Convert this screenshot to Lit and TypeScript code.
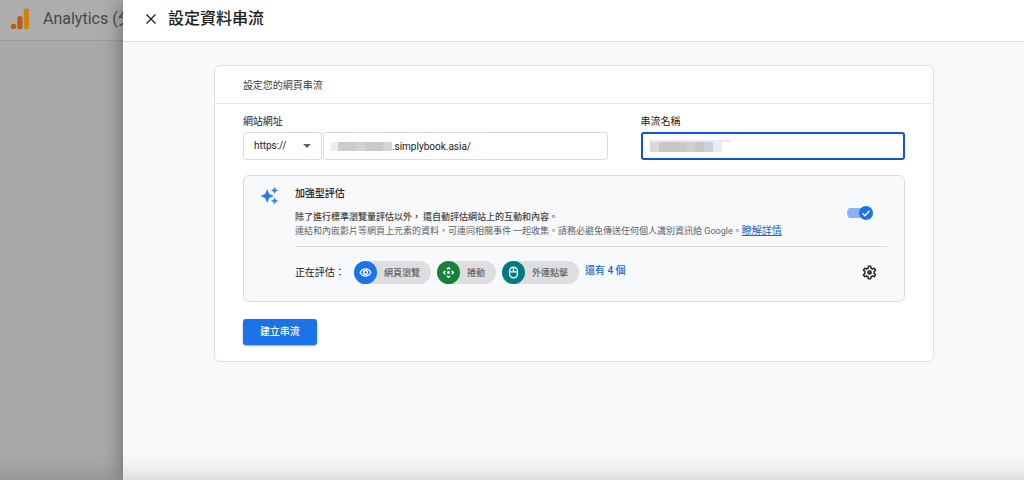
import { LitElement, html, css, svg } from "lit";
import { customElement, property, state } from "lit/decorators.js";

const eye = svg`<path d="M1.500 8C3 5 5.300 3.600 8 3.600S13 5 14.500 8C13 11 10.700 12.400 8 12.400S3 11 1.500 8Z" /><circle cx="8" cy="8" r="2.400" />`;
const scroll = svg`<circle cx="8" cy="8" r="1.700" fill="currentColor" stroke="none" /><path d="M5.900 4.100 8 2 10.100 4.100M5.900 11.900 8 14 10.100 11.900M4.100 5.900 2 8 4.100 10.100M11.900 5.900 14 8 11.900 10.100" />`;
const mouse = svg`<rect x="3.200" y="1.500" width="9.600" height="13" rx="4.600" /><path d="M3.200 7.200H12.800M8 2V7" />`;

@customElement("metric-chip")
class MetricChip extends LitElement {
  @property() label = "";
  @property() tone = "blue";
  @property({ attribute: false }) icon: unknown;

  static styles = css`
    :host { display: block; }
    .chip { display: flex; align-items: center; height: 23px; border-radius: 12px; background: #dedede; color: #5f6368; font-size: 9px; font-weight: 500; padding-right: 11px; gap: 7px; white-space: nowrap; }
    .dot { display: grid; place-items: center; width: 23px; height: 23px; border-radius: 50%; color: #fff; }
    .blue { background: #1a73e8; }
    .green { background: #188038; }
    .teal { background: #007b83; }
    svg { width: 13px; height: 13px; fill: none; stroke: currentColor; stroke-width: 1.7; }
  `;

  render() {
    return html`<div class="chip">
      <span class="dot ${this.tone}"><svg viewBox="0 0 16 16" aria-hidden="true">${this.icon}</svg></span>
      <span>${this.label}</span>
    </div>`;
  }
}

@customElement("app-root")
class AppRoot extends LitElement {
  @state() private enhanced = true;

  static styles = css`
    :host { display: block; font-family: Roboto, "Noto Sans CJK TC", sans-serif; color: #202124; font-size: 10px; line-height: 14px; }
    * { box-sizing: border-box; }
    button, input, select { font: inherit; color: inherit; margin: 0; }
    h1, h2, h3, p { margin: 0; font-size: inherit; font-weight: 400; }
    .page { position: relative; display: grid; grid-template-columns: 12% minmax(0, 1fr); min-height: 100vh; overflow: hidden; }
    .behind { background: #a8a9aa; overflow: hidden; }
    .brand { display: flex; align-items: center; gap: 13px; height: 41px; padding: 0 0 3px 10px; background: #adadad; border-bottom: 1px solid #9b9b9c; font-size: 16px; color: #45484b; white-space: nowrap; }
    .brand svg { width: 20px; height: 22px; flex: none; }
    .drawer { position: relative; background: #f8f9fb; box-shadow: 0 0 20px rgba(0, 0, 0, 0.4); }
    .bar { display: flex; align-items: center; gap: 9px; height: 42px; padding: 0 20px 4px; background: #fff; border-bottom: 1px solid #e0e1e3; }
    .bar h1 { font-size: 16px; line-height: 22px; font-weight: 500; }
    .plain { display: grid; place-items: center; padding: 0; border: 0; background: none; }
    .close svg { width: 16px; height: 16px; }
    .content { padding: 23px 90px 23px 91px; }
    .card { background: #fff; border: 1px solid #dfe1e5; border-radius: 6px; }
    .card-title { padding: 13px 28px 10px; border-bottom: 1px solid #e4e5e7; color: #3c4043; }
    .body { padding: 11px 28px 16px; }
    .fields { display: grid; grid-template-columns: minmax(0, 364fr) minmax(0, 264fr); gap: 33px; }
    .caption { display: block; margin-bottom: 3px; }
    .row { display: grid; grid-template-columns: 79px minmax(0, 1fr); gap: 1px; }
    .box { display: flex; align-items: center; position: relative; height: 28px; border: 1px solid #dadce0; border-radius: 3px; background: #fff; }
    .box select { appearance: none; width: 100%; height: 100%; border: 0; padding: 0 10px; background: none; outline: 0; color: #202124; }
    .box svg { position: absolute; right: 10px; width: 8px; height: 4px; pointer-events: none; fill: #5f6368; }
    .box input { flex: 1; min-width: 0; height: 100%; padding: 0; border: 0; outline: 0; background: none; }
    .url { padding-left: 7px; }
    .focused { border: 2px solid #0b57d0; padding-left: 7px; }
    .mask { flex: none; height: 9px; }
    .mask-url { width: 61px; background: linear-gradient(90deg, #ededee 0 7px, #cbcccd 7px 25px, #d1d2d3 25px 34px, #c9cacb 34px 52px, #d4d4d5 52px); }
    .mask-name { width: 80px; height: 12px; background: linear-gradient(#e2eafb, #e2eafb) 0 0 / 80px 2px no-repeat, linear-gradient(90deg, #d9d9da 0 9px, #c8c8c9 9px 36px, #cfcfd0 36px 45px, #c8c8c9 45px 54px, #ccd0d8 54px 63px, #eaecf4 63px 72px, transparent 72px); }
    .panel { display: grid; grid-template-columns: 17px minmax(0, 1fr); column-gap: 17px; margin-top: 15px; padding: 11px 17px 17px; border: 1px solid #dadce0; border-radius: 6px; background: #f8f9fb; }
    .spark { width: 17px; height: 17px; fill: #2a78ee; }
    .about { display: flex; justify-content: space-between; align-items: center; padding-bottom: 8px; border-bottom: 1px solid #dadce0; }
    .about h3 { font-weight: 500; margin-bottom: 10px; color: #202124; }
    .about p { font-size: 9px; line-height: 13px; color: #5f6368; }
    .about .lead { color: #3c4043; font-weight: 500; }
    .about a { font-size: 10px; color: #1967d2; text-decoration: underline; }
    .switch { flex: none; display: grid; margin-right: 14px; }
    .switch input { appearance: none; display: flex; align-items: center; width: 26px; height: 14px; outline: 0; background: linear-gradient(#8ab0f8, #8ab0f8) 0 50% / 22px 10px no-repeat; border-radius: 7px 0 0 7px; }
    .switch input, .switch svg { grid-area: 1 / 1; }
    .switch svg { width: 14px; height: 14px; justify-self: start; pointer-events: none; }
    .switch input:checked + svg { justify-self: end; }
    .measuring { display: flex; align-items: center; padding-top: 14px; }
    .chips { display: flex; gap: 6px; margin: 0 6px 0 9px; }
    .more { color: #1967d2; text-decoration: none; font-weight: 500; margin-bottom: 3px; }
    .gear { margin: 0 9px 0 auto; }
    .gear svg { width: 17px; height: 17px; }
    .create { display: block; margin-top: 17px; height: 26px; padding: 0 17px; border: 0; border-radius: 3px; background: #1a73e8; color: #fff; font-weight: 500; box-shadow: 0 1px 2px rgba(60, 64, 67, 0.45); }
    .edge { position: absolute; inset: auto 0 0 0; height: 28px; pointer-events: none; background: linear-gradient(transparent, rgba(0, 0, 0, 0.03) 50%, rgba(0, 0, 0, 0.11)); }
  `;

  render() {
    return html`<div class="page">
      <div class="behind">
        <div class="brand">
          <svg viewBox="0 0 20 22" aria-hidden="true">
            <circle cx="3.500" cy="18.500" r="2.700" fill="#bd5a14" />
            <rect x="7.300" y="8" width="5.200" height="13.300" rx="2.600" fill="#bd5a14" />
            <rect x="13.800" y="0.300" width="5.300" height="21" rx="2.650" fill="#c8860c" />
          </svg>
          <span>Analytics (分</span>
        </div>
      </div>
      <main class="drawer">
        <header class="bar">
          <button class="plain close" aria-label="關閉">
            <svg viewBox="0 0 16 16"><path d="M3.500 3.500 12.500 12.500M12.500 3.500 3.500 12.500" stroke="#202124" stroke-width="1.300" /></svg>
          </button>
          <h1>設定資料串流</h1>
        </header>
        <div class="content">
          <section class="card">
            <h2 class="card-title">設定您的網頁串流</h2>
            <div class="body">
              <div class="fields">
                <div>
                  <label class="caption" for="url">網站網址</label>
                  <div class="row">
                    <div class="box">
                      <select aria-label="https://"><option>https://</option></select>
                      <svg viewBox="0 0 8 4"><path d="M0 0H8L4 4Z" /></svg>
                    </div>
                    <div class="box url"><span class="mask mask-url"></span><input id="url" value=".simplybook.asia/" /></div>
                  </div>
                </div>
                <div>
                  <label class="caption" for="name">串流名稱</label>
                  <div class="box focused"><span class="mask mask-name"></span><input id="name" /></div>
                </div>
              </div>
              <section class="panel">
                <svg class="spark" viewBox="0 0 17 17" aria-hidden="true">
                  <path d="M6.200 2.800 8 7.200 12.200 9 8 10.800 6.200 15.200 4.400 10.800 0.200 9 4.400 7.200ZM13.500 0.500 14.300 2.500 16.500 3.400 14.300 4.300 13.500 6.300 12.700 4.300 10.500 3.400 12.700 2.500ZM13.500 11 14.300 13 16.500 13.900 14.300 14.800 13.500 16.800 12.700 14.800 10.500 13.900 12.700 13Z" stroke="#2a78ee" stroke-width="0.600" stroke-linejoin="round" />
                </svg>
                <div>
                  <div class="about">
                    <div>
                      <h3>加強型評估</h3>
                      <p class="lead">除了進行標準瀏覽量評估以外， 還自動評估網站上的互動和內容。</p>
                      <p>連結和內嵌影片等網頁上元素的資料，可連同相關事件 一起收集。請務必避免傳送任何個人識別資訊給 Google。<a href="#">瞭解詳情</a></p>
                    </div>
                    <label class="switch">
                      <input type="checkbox" role="switch" aria-label="加強型評估" .checked=${this.enhanced} @change=${(e: Event) => (this.enhanced = (e.target as HTMLInputElement).checked)} />
                      <svg viewBox="0 0 14 14"><circle cx="7" cy="7" r="7" fill="#1a73e8" /><path d="M3.500 7.300 5.900 9.700 10.600 4.700" fill="none" stroke="#fff" stroke-width="1.400" /></svg>
                    </label>
                  </div>
                  <div class="measuring">
                    <span>正在評估：</span>
                    <div class="chips">
                      <metric-chip label="網頁瀏覽" tone="blue" .icon=${eye}></metric-chip>
                      <metric-chip label="捲動" tone="green" .icon=${scroll}></metric-chip>
                      <metric-chip label="外連點擊" tone="teal" .icon=${mouse}></metric-chip>
                    </div>
                    <a class="more" href="#">還有 4 個</a>
                    <button class="plain gear" aria-label="設定">
                      <svg viewBox="0 0 24 24" fill="#202124"><path d="M19.430 12.980c.040-.320.070-.640.070-.980 0-.340-.030-.660-.070-.980l2.110-1.650c.190-.150.240-.420.120-.640l-2-3.460c-.090-.160-.260-.250-.440-.250-.060 0-.120.010-.170.030l-2.490 1c-.520-.400-1.080-.730-1.690-.980l-.380-2.650C14.460 2.180 14.250 2 14 2h-4c-.250 0-.460.180-.490.420l-.380 2.650c-.610.250-1.170.590-1.690.980l-2.490-1c-.060-.020-.120-.030-.180-.030-.170 0-.340.090-.430.250l-2 3.460c-.130.220-.070.490.120.640l2.110 1.650c-.040.320-.070.650-.070.980 0 .330.030.660.070.980l-2.110 1.650c-.190.150-.240.420-.120.640l2 3.460c.090.160.260.250.440.250.060 0 .120-.010.170-.030l2.490-1c.520.400 1.080.730 1.690.980l.380 2.650c.030.240.240.420.490.420h4c.250 0 .460-.180.490-.420l.380-2.650c.610-.250 1.170-.590 1.690-.980l2.490 1c.060.020.120.030.180.030.170 0 .340-.090.430-.250l2-3.460c.120-.220.070-.490-.120-.640l-2.110-1.650zm-1.980-1.710c.040.310.050.520.050.730 0 .210-.020.430-.050.730l-.140 1.130.890.700 1.080.840-.700 1.210-1.270-.510-1.040-.420-.900.680c-.430.320-.840.560-1.250.730l-1.060.430-.160 1.130-.200 1.350h-1.400l-.190-1.350-.160-1.130-1.060-.430c-.430-.180-.830-.410-1.230-.710l-.910-.700-1.060.430-1.270.510-.700-1.210 1.080-.840.890-.700-.140-1.130c-.030-.310-.050-.540-.050-.740s.020-.430.050-.730l.140-1.130-.890-.700-1.080-.840.700-1.210 1.270.510 1.040.420.900-.680c.430-.320.840-.560 1.250-.730l1.060-.430.160-1.130.200-1.350h1.390l.190 1.350.160 1.130 1.060.430c.430.180.830.410 1.230.710l.910.700 1.060-.430 1.270-.510.700 1.210-1.070.850-.890.700.140 1.130z" /><circle cx="12" cy="12" r="3.500" fill="#3c4043" /></svg>
                    </button>
                  </div>
                </div>
              </section>
              <button class="create">建立串流</button>
            </div>
          </section>
        </div>
      </main>
      <div class="edge"></div>
    </div>`;
  }
}
